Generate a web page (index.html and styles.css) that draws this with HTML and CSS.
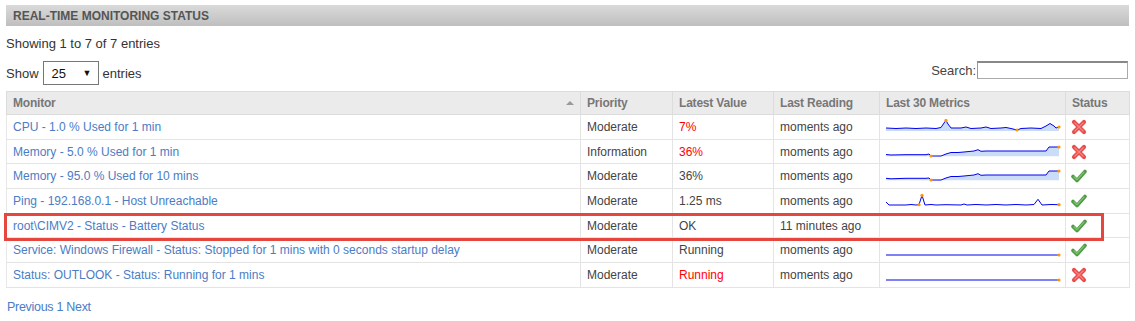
FILE: index.html
```html
<!DOCTYPE html>
<html>
<head>
<meta charset="utf-8">
<link rel="stylesheet" href="styles.css">
</head>
<body>
<div class="panel">
  <div class="title">REAL-TIME MONITORING STATUS</div>
  <div class="info">Showing 1 to 7 of 7 entries</div>
  <div class="controls">
    <div class="length">Show <span class="select"><span>25</span><span class="caret">▼</span></span> entries</div>
    <div class="search">Search:<span class="input"></span></div>
  </div>
  <div class="tablewrap">
  <table class="grid">
    <colgroup>
      <col class="c-mon"><col class="c-pri"><col class="c-val"><col class="c-read"><col class="c-spark"><col class="c-stat">
    </colgroup>
    <thead>
      <tr>
        <th class="sorted">Monitor<span class="sort"></span></th>
        <th>Priority</th>
        <th>Latest Value</th>
        <th>Last Reading</th>
        <th>Last 30 Metrics</th>
        <th>Status</th>
      </tr>
    </thead>
    <tbody>
      <tr>
        <td><a href="#">CPU - 1.0 % Used for 1 min</a></td>
        <td>Moderate</td>
        <td class="bad">7%</td>
        <td>moments ago</td>
        <td class="spark"><svg width="176" height="16" viewBox="0 0 176 16"><polygon class="fill" points="0,9 10,9.5 20,9 30,9.5 40,9 50,9.5 55,8.5 58,4 60,1.5 62,5 65,9 75,9 80,8 85,9.5 95,9 100,8 105,9.5 115,9 120,8.5 125,9.5 131,11 135,9.5 145,9 155,9.5 160,7 164,4.5 168,7 170,9 173,8 173,12 0,12"/><polyline class="line" points="0,9 10,9.5 20,9 30,9.5 40,9 50,9.5 55,8.5 58,4 60,1.5 62,5 65,9 75,9 80,8 85,9.5 95,9 100,8 105,9.5 115,9 120,8.5 125,9.5 131,11 135,9.5 145,9 155,9.5 160,7 164,4.5 168,7 170,9 173,8"/><circle class="dot" cx="60" cy="1.5" r="1.6"/><circle class="dot" cx="131" cy="11" r="1.6"/><circle class="dot" cx="173" cy="8" r="1.6"/></svg></td>
        <td class="stat"><svg class="ic" width="16" height="16" viewBox="0 0 16 16"><path class="x-out" d="M3,3 L13,13 M13,3 L3,13"/><path class="x-in" d="M3.5,3.5 L12.5,12.5 M12.5,3.5 L3.5,12.5"/></svg></td>
      </tr>
      <tr>
        <td><a href="#">Memory - 5.0 % Used for 1 min</a></td>
        <td>Information</td>
        <td class="bad">36%</td>
        <td>moments ago</td>
        <td class="spark"><svg width="176" height="16" viewBox="0 0 176 16"><polygon class="fill" points="0,10.5 5,11 20,10.7 40,10.7 43,10 45,12 55,12 60,10 65,8.5 72,8.5 78,8 83,7.5 88,7 92,5.7 95,7.3 100,7 140,7 160,7 163,3 173,3 173,12.3 0,12.3"/><polyline class="line" points="0,10.5 5,11 20,10.7 40,10.7 43,10 45,12 55,12 60,10 65,8.5 72,8.5 78,8 83,7.5 88,7 92,5.7 95,7.3 100,7 140,7 160,7 163,3 173,3"/><circle class="dot" cx="45" cy="12" r="1.6"/><circle class="dot" cx="173" cy="3" r="1.6"/></svg></td>
        <td class="stat"><svg class="ic" width="16" height="16" viewBox="0 0 16 16"><path class="x-out" d="M3,3 L13,13 M13,3 L3,13"/><path class="x-in" d="M3.5,3.5 L12.5,12.5 M12.5,3.5 L3.5,12.5"/></svg></td>
      </tr>
      <tr>
        <td><a href="#">Memory - 95.0 % Used for 10 mins</a></td>
        <td>Moderate</td>
        <td>36%</td>
        <td>moments ago</td>
        <td class="spark"><svg width="176" height="16" viewBox="0 0 176 16"><polygon class="fill" points="0,10.3 5,10.8 20,10.3 40,10.3 43,10 45,12 55,12 60,10 65,8.5 72,8.5 78,8 83,7.5 88,7 92,5.7 95,7.3 100,7 140,7 160,7 163,3 173,3 173,12.3 0,12.3"/><polyline class="line" points="0,10.3 5,10.8 20,10.3 40,10.3 43,10 45,12 55,12 60,10 65,8.5 72,8.5 78,8 83,7.5 88,7 92,5.7 95,7.3 100,7 140,7 160,7 163,3 173,3"/><circle class="dot" cx="45" cy="12" r="1.6"/><circle class="dot" cx="173" cy="3" r="1.6"/></svg></td>
        <td class="stat"><svg class="ic" width="16" height="16" viewBox="0 0 16 16"><path class="v-out" d="M2,8.5 L6,12.5 L14,3.5"/><path class="v-in" d="M2.6,8.5 L6,11.8 L13.4,3.6"/></svg></td>
      </tr>
      <tr>
        <td><a href="#">Ping - 192.168.0.1 - Host Unreachable</a></td>
        <td>Moderate</td>
        <td>1.25 ms</td>
        <td>moments ago</td>
        <td class="spark"><svg width="176" height="16" viewBox="0 0 176 16"><polyline class="line" points="0,9 3,12 20,12 25,11.5 30,12 33,11.7 36,2.3 39,12 45,11.5 50,12 60,11.7 75,12 78,11 81,12 90,11.5 100,12 110,11.5 120,12 130,11.5 140,12 148,11.5 152,6.3 156,12 165,11.5 173,11.7"/><circle class="dot" cx="33" cy="11.7" r="1.6"/><circle class="dot" cx="36" cy="2.3" r="1.6"/><circle class="dot" cx="173" cy="11.7" r="1.6"/></svg></td>
        <td class="stat"><svg class="ic" width="16" height="16" viewBox="0 0 16 16"><path class="v-out" d="M2,8.5 L6,12.5 L14,3.5"/><path class="v-in" d="M2.6,8.5 L6,11.8 L13.4,3.6"/></svg></td>
      </tr>
      <tr class="hl">
        <td><a href="#">root\CIMV2 - Status - Battery Status</a><span class="mark"></span></td>
        <td>Moderate</td>
        <td>OK</td>
        <td>11 minutes ago</td>
        <td class="spark"></td>
        <td class="stat"><svg class="ic" width="16" height="16" viewBox="0 0 16 16"><path class="v-out" d="M2,8.5 L6,12.5 L14,3.5"/><path class="v-in" d="M2.6,8.5 L6,11.8 L13.4,3.6"/></svg></td>
      </tr>
      <tr>
        <td><a href="#">Service: Windows Firewall - Status: Stopped for 1 mins with 0 seconds startup delay</a></td>
        <td>Moderate</td>
        <td>Running</td>
        <td>moments ago</td>
        <td class="spark"><svg width="176" height="16" viewBox="0 0 176 16"><polyline class="line" points="0,13 173,13"/><circle class="dot" cx="173" cy="13" r="1.6"/></svg></td>
        <td class="stat"><svg class="ic" width="16" height="16" viewBox="0 0 16 16"><path class="v-out" d="M2,8.5 L6,12.5 L14,3.5"/><path class="v-in" d="M2.6,8.5 L6,11.8 L13.4,3.6"/></svg></td>
      </tr>
      <tr>
        <td><a href="#">Status: OUTLOOK - Status: Running for 1 mins</a></td>
        <td>Moderate</td>
        <td class="bad">Running</td>
        <td>moments ago</td>
        <td class="spark"><svg width="176" height="16" viewBox="0 0 176 16"><polyline class="line" points="0,13 173,13"/><circle class="dot" cx="173" cy="13" r="1.6"/></svg></td>
        <td class="stat"><svg class="ic" width="16" height="16" viewBox="0 0 16 16"><path class="x-out" d="M3,3 L13,13 M13,3 L3,13"/><path class="x-in" d="M3.5,3.5 L12.5,12.5 M12.5,3.5 L3.5,12.5"/></svg></td>
      </tr>
    </tbody>
  </table>
  </div>
  <div class="pager"><a href="#">Previous</a> <a href="#">1</a> <a href="#">Next</a></div>
</div>
</body>
</html>
```
FILE: styles.css
```css
html, body { margin: 0; padding: 0; background: #fff; }
body { font-family: "Liberation Sans", Arial, sans-serif; font-size: 13px; color: #333; }
.panel { padding: 5px 6px 0 6px; }
.title {
  height: 21px; line-height: 22px; padding-left: 7px;
  background: linear-gradient(#dadada, #bfbfbf);
  color: #555; font-weight: bold; font-size: 12px;
}
.info { margin-top: 10px; line-height: 15px; }
.controls { display: flex; justify-content: space-between; align-items: flex-start; margin-top: 10px; }
.length { display: flex; align-items: center; gap: 4px; line-height: 15px; }
.select {
  display: inline-flex; align-items: center; justify-content: space-between;
  box-sizing: border-box; width: 56px; height: 24px; border: 1px solid #777;
  padding: 0 6px 0 8px; color: #111; background: #fff;
}
.caret { font-size: 9px; }
.search { display: flex; align-items: center; line-height: 15px; color: #444; margin-right: 1px; }
.input { display: inline-block; box-sizing: border-box; width: 151px; height: 18px; border: 1px solid #aaa; border-top: 2px solid #888; border-left: 1px solid #999; margin-left: 1px; }
.tablewrap { position: relative; margin-top: 6px; }
.grid { width: 1123px; border-collapse: collapse; table-layout: fixed; font-size: 12px; }
.c-mon { width: 574px; } .c-pri { width: 92px; } .c-val { width: 101px; }
.c-read { width: 106px; } .c-spark { width: 186px; } .c-stat { width: 64px; }
.grid th {
  height: 22px; background: #ebebeb; color: #777; font-size: 12px; font-weight: bold;
  text-align: left; padding: 0 6px; border: 1px solid #dcdcdc; position: relative;
  letter-spacing: -0.2px;
}
.grid td {
  height: 23.7px; padding: 0 6px; border: 1px solid #e4e4e4; color: #444; white-space: nowrap;
}
.grid td:first-child { border-left: 1px solid #e8e8e8; }
.sort {
  position: absolute; right: 6px; top: 9px; width: 0; height: 0;
  border-left: 4px solid transparent; border-right: 4px solid transparent; border-bottom: 4px solid #999;
}
a { color: #4b7cc6; text-decoration: none; }
.bad { color: #f00 !important; }
.grid td.spark { padding: 0 0 0 6px; line-height: 0; }
.spark svg { display: block; }
.fill { fill: #cadcf8; stroke: none; }
.line { fill: none; stroke: #0000ee; stroke-width: 1; }
.dot { fill: #ff9900; }
.grid td.stat { padding: 0 0 0 5px; line-height: 0; }
.ic { display: block; }
.x-out { stroke: #e94c4c; stroke-width: 4.2; stroke-linecap: round; fill: none; }
.x-in { stroke: #f58484; stroke-width: 1.2; fill: none; }
.v-out { stroke: #4f9a45; stroke-width: 3.6; stroke-linecap: round; stroke-linejoin: round; fill: none; }
.v-in { stroke: #7ec26f; stroke-width: 1.3; fill: none; stroke-linejoin: round; }
.hl td:first-child { position: relative; }
.mark {
  position: absolute; left: -3px; top: -1px; width: 1100px; height: 28px;
  box-sizing: border-box; border: 3px solid #e5473f; pointer-events: none;
}
.pager { margin-top: 12px; padding-left: 1px; font-size: 12.5px; letter-spacing: -0.3px; }
.pager a { color: #4b7cc6; }
```
